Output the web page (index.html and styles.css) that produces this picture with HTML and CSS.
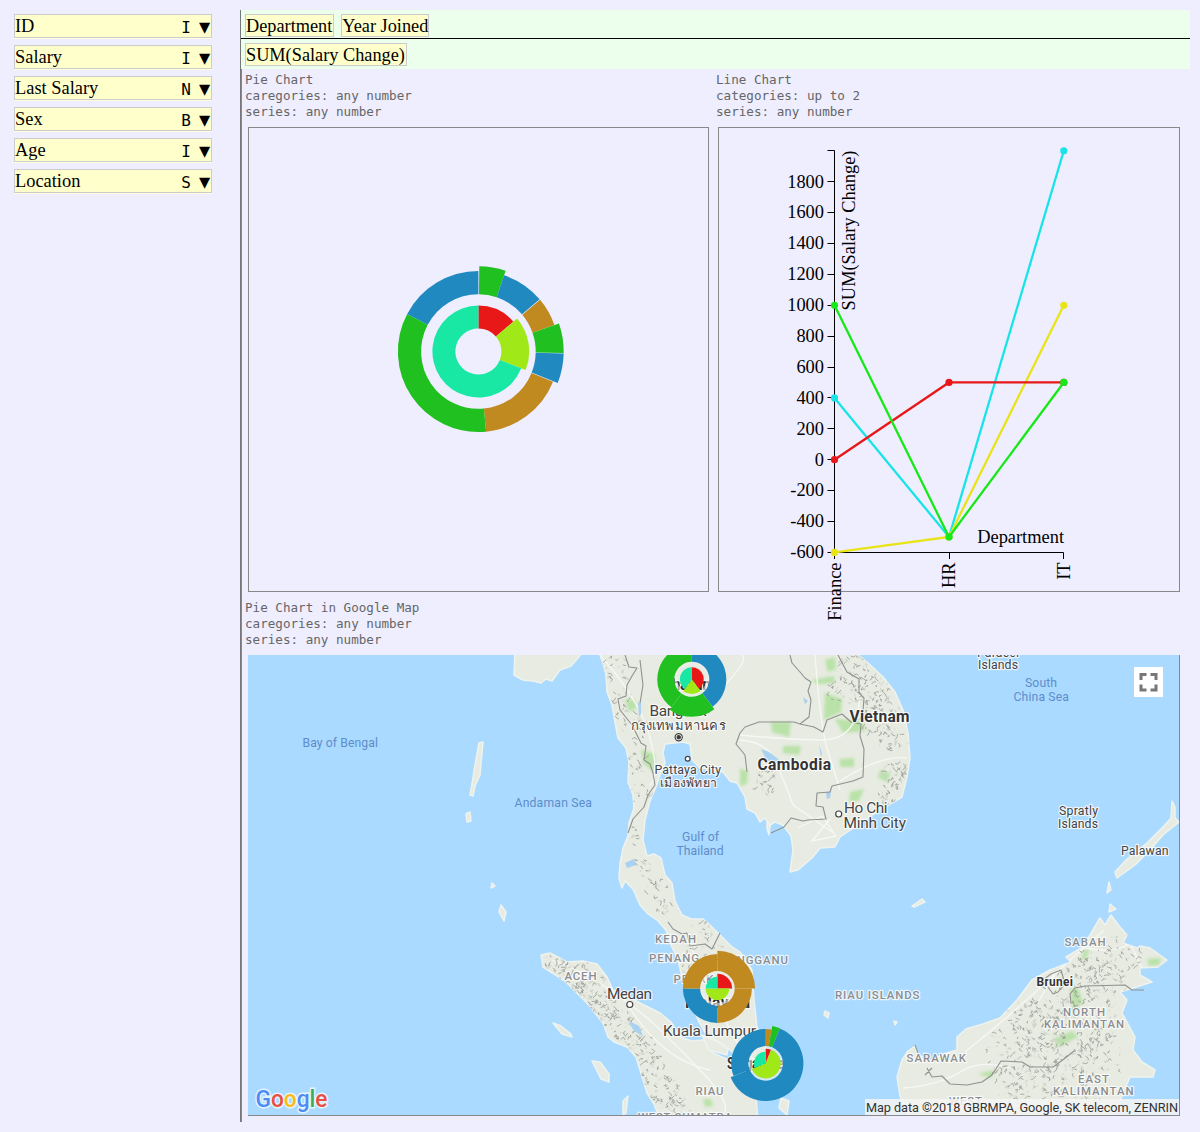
FILE: index.html
```html
<!DOCTYPE html>
<html lang="en">
<head>
<meta charset="utf-8">
<title>Salary pivot</title>
<link rel="stylesheet" href="styles.css">
</head>
<body>
<div class="app">
  <aside class="fields">
    <div class="field"><span>ID</span><span class="kind">I</span><span class="arrow">▼</span></div>
    <div class="field"><span>Salary</span><span class="kind">I</span><span class="arrow">▼</span></div>
    <div class="field"><span>Last Salary</span><span class="kind">N</span><span class="arrow">▼</span></div>
    <div class="field"><span>Sex</span><span class="kind">B</span><span class="arrow">▼</span></div>
    <div class="field"><span>Age</span><span class="kind">I</span><span class="arrow">▼</span></div>
    <div class="field"><span>Location</span><span class="kind">S</span><span class="arrow">▼</span></div>
  </aside>
  <main class="board">
    <div class="shelf categories"><span class="chip">Department</span><span class="chip">Year Joined</span></div>
    <div class="shelf series"><span class="chip">SUM(Salary Change)</span></div>
    <div class="charts">
      <section class="panel">
        <p class="caption">Pie Chart<br>caregories: any number<br>series: any number</p>
        <div class="frame"><svg class="plot" id="pie" viewBox="249 128 459 463"></svg></div>
      </section>
      <section class="panel">
        <p class="caption">Line Chart<br>categories: up to 2<br>series: any number</p>
        <div class="frame"><svg class="plot" id="line" viewBox="719 128 460 463"></svg></div>
      </section>
      <section class="panel wide">
        <p class="caption">Pie Chart in Google Map<br>caregories: any number<br>series: any number</p>
        <div class="map">
          <svg class="mapdraw" viewBox="248 655 931 460">
            <defs>
              <clipPath id="landclip"><use href="#mainland"/><use href="#sumatra"/><use href="#borneo"/></clipPath>
              <filter id="soft" x="-50%" y="-50%" width="200%" height="200%"><feGaussianBlur stdDeviation="1.4"/></filter>
            </defs>
            <g class="land">
              <path d="M515 650L514 675 523 680 533 681 541 683 546 679 552 681 560 670 571 666 578 658 584 650Z"/>
              <path id="mainland" d="M598 650L603 663 606 675 607 692 612 705 615 722 618 738 626 748 629 762 628 782 633 795 634 808 629 823 628 836 623 848 620 864 619 878 622 888 625 881 633 889 640 905 648 914 657 920 666 930 671 945 678 960 682 977 689 990 693 1007 699 1022 707 1036 722 1044 735 1054 750 1065 762 1068 769 1060 764 1042 757 1027 754 1000 752 970 740 952 731 946 720 935 710 925 703 919 691 919 682 915 675 901 672 883 665 875 661 858 654 854 647 856 643 840 645 820 650 801 656 787 660 775 665 763 663 753 665 744 674 743 683 742 690 744 692 760 700 768 710 769 723 772 730 781 737 783 745 797 747 809 755 813 760 822 765 818 770 825 775 822 783 825 791 836 793 850 790 872 798 870 812 858 820 848 835 847 840 837 855 827 880 810 902 797 907 777 910 758 908 733 903 710 895 692 883 677 867 662 852 650Z"/>
              <path id="sumatra" d="M541 955L550 953 567 962 583 961 597 964 607 977 613 990 625 995 640 1003 660 1013 671 1022 680 1037 692 1041 704 1040 713 1053 733 1062 747 1080 756 1098 758 1120 660 1120 654 1104 647 1093 640 1070 636 1057 627 1047 614 1042 608 1037 603 1023 587 1003 567 983 554 974 543 967Z"/>
              <path id="borneo" d="M910 1120L900 1096 897 1077 902 1060 908 1051 915 1046 918 1055 930 1061 944 1054 957 1050 957 1037 966 1029 983 1024 1000 1018 1017 1000 1032 980 1050 970 1058 967 1071 962 1066 957 1083 947 1100 918 1105 925 1111 915 1120 927 1127 935 1123 943 1137 948 1140 946 1150 948 1167 960 1158 967 1140 968 1140 975 1152 982 1133 988 1120 992 1127 1000 1122 1013 1135 1037 1133 1050 1142 1062 1155 1070 1153 1077 1130 1077 1123 1093 1113 1120Z"/>
              <path d="M1172 801L1175 807 1175 818 1179 822 1163 835 1150 850 1135 865 1117 878 1115 872 1127 859 1147 843 1163 827 1171 818Z"/>
              <path d="M479 743L483 742 481 763 480 775 475 786 473 796 470 795 472 784 474 771Z M466 814L470 812 471 821 467 822Z M501 905L506 912 504 921 499 912Z M553 1023L561 1026 571 1034 572 1037 562 1034Z M592 1061L600 1062 609 1074 609 1082 601 1079Z M623 1101L628 1096 626 1113 623 1115Z M702 1035L716 1041 728 1049 727 1055 709 1050Z M912 906L922 899 925 902 914 907Z M781 1098L789 1101 787 1115 779 1108Z M1109 882L1111 890 1107 893Z M1110 904L1116 909 1109 912Z M492 883L495 886 491 888Z M825 1011L829 1013 828 1018 824 1015Z M894 1021L897 1022 895 1025Z M767 822L770 826 769 835 767 829Z"/>
            </g>
            <g class="greens" clip-path="url(#landclip)" filter="url(#soft)">
              <path d="M625 699l9 1 4 7-9 5zM641 750l14 4-1 18-10-8zM825 660l10-3 1 12-8 3zM825 693l17 6-1 13-17 8zM812 680l22-4 1 7-18 1zM771 722h20l-2 15-17-5zM783 746h18l-2 9-16-2zM835 719l28 2 2 10-22 2zM840 759l14-1v9h-14zM880 770l10 3-2 9-10-4zM850 792l14-3-5 12-10 1zM740 768l8 4-1 12-7 2zM1070 989l8-1 5 14-10 10zM1084 951l6-3-3 9-7 5zM1053 1039l19-8 6 6-19 10zM1147 959l14-1-2 7-10 1zM978 1074l17-4-4 8zM703 1099h8l2 7-8 1zM675 975l10 6-2 10-6-2z"/>
            </g>
            <g class="roads" clip-path="url(#landclip)">
              <path d="M600 655Q640 700 650 738T650 785M740 740Q765 742 773 757T793 805L835 834M740 735Q780 739 820 740T860 690M815 655Q820 720 826 745L840 790M798 828l24 -12 14 20-24 5 18-22M840 781Q880 755 907 758M720 690Q750 660 742 655M552 960Q580 970 601 984T640 1012 700 1070 715 1116M625 1000Q660 1060 710 1070M690 945Q715 1000 730 1030T765 1063M965 1052Q1005 1020 1043 985T1104 930M903 1088Q940 1085 960 1072T1010 1068M1085 948Q1115 954 1130 943L1143 970M1055 975Q1045 990 1037 1004"/>
            </g>
            <g id="terrain" clip-path="url(#landclip)"></g>
            <g class="lakes"><path d="M761 749l8 3 13 10 7 7-10-5-12-3zM803 697l5 4-3 3zM625 863l9-4 2 6-9 3zM631 1022l8 4 4 10-9-5-5-8zM826 792l5-1-1 7-3 1zM638 703l3-1 0 12-2 3zM819 745l3 8-1 4z"/></g>
            <g class="borders">
              <path d="M625 655l4 12 8 1-5 8-5 9-1 11-8 3 2 11 12 15 9 18 5 3-2 14 6 4 3 9 2 12-7 10-4 12-11 12-5 14M640 660l3 25-3 18M790 655l2 8 8 9 5 6 6 4-3 9 3 9-2 17-9 7-6-2-35 0-14 5-5 6-4 11 9 11 2 17 M800 724l14 3 9 5 4-12 15-6 9 8 10 2-1 12 4 13-1 28-10 4-21 5-2 6-13 1-1 13 7 1 3 12-18 1-5 1-12-3-7 9-13 6M838 655l9 17 12 7 0 14 5 5-1 13-3 9M668 922l5 7 9 5 5-1 3 13 15-2 7 5 8-16M1043 980l8-6 10-4 4 14-7 8-5 2-10-14M1071 1003l-1-9 5-6 10-2 40-1 7 5 12 0M927 1068l5 9 10-1 8 8 17 1 15-3 10-7 9-14 21 1 8 5 23 0 11-8 10-8M925 1075l7-7M915 1045l3 8"/>
            </g>
            <g class="towns"><circle cx="687.7" cy="758.7" r="2.4"/><circle cx="838.7" cy="814" r="3"/><circle cx="629.8" cy="1004.5" r="3"/><circle cx="678.7" cy="737.3" r="3.6"/><circle class="capital" cx="678.7" cy="737.3" r="1.7"/></g>
            <g class="labels">
              <g class="sea">
                <text x="302.5" y="746.5" textLength="75.5">Bay of Bengal</text><text x="514.5" y="807" textLength="77.5">Andaman Sea</text>
                <text x="682" y="841" textLength="37">Gulf of</text><text x="676.5" y="855" textLength="47">Thailand</text>
                <text x="1025" y="687" textLength="32">South</text><text x="1013.5" y="701" textLength="55.5">China Sea</text>
              </g>
              <g class="place">
                <text x="977" y="657" textLength="42">Paracel</text><text x="978" y="669" textLength="40">Islands</text>
                <text x="1059" y="815" textLength="39">Spratly</text><text x="1058" y="828" textLength="40">Islands</text>
                <text x="1121" y="855" textLength="47.5">Palawan</text>
                <text x="654.5" y="774" textLength="66.5">Pattaya City</text><text x="660" y="786.5" textLength="57">เมืองพัทยา</text>
              </g>
              <g class="city">
                <text x="649.5" y="715.5" textLength="57">Bangkok</text><text class="thai" x="630.5" y="730" textLength="95">กรุงเทพมหานคร</text>
                <text x="844" y="812.5" textLength="43.5">Ho Chi</text><text x="843.5" y="827.5" textLength="62.5">Minh City</text>
                <text x="607" y="998.5" textLength="45">Medan</text><text x="663" y="1035.5" textLength="93">Kuala Lumpur</text>
              </g>
              <g class="country">
                <text x="849.5" y="721.5" textLength="60">Vietnam</text><text x="757.5" y="769.5" textLength="73.5">Cambodia</text>
                <text x="663" y="690" textLength="56">Thailand</text><text x="685" y="1008" textLength="65">Malaysia</text><text x="727" y="1069" textLength="57" lengthAdjust="spacingAndGlyphs">Singapore</text>
                <text class="small" x="1036.5" y="985.5" textLength="36.5">Brunei</text>
              </g>
              <g class="region">
                <text x="655" y="943" textLength="41">KEDAH</text><text x="649" y="961.5" textLength="50">PENANG</text><text x="706" y="963.5" textLength="82">TERENGGANU</text><text x="673.5" y="983" textLength="40">PERAK</text>
                <text x="564.5" y="979.5" textLength="32">ACEH</text><text x="695.5" y="1094.5" textLength="28">RIAU</text><text x="835" y="999" textLength="84.5">RIAU ISLANDS</text>
                <text x="1064.5" y="946" textLength="41">SABAH</text><text x="1063" y="1016" textLength="42">NORTH</text><text x="1044" y="1028" textLength="80">KALIMANTAN</text>
                <text x="906.5" y="1062" textLength="59.5">SARAWAK</text><text x="1078" y="1083" textLength="31">EAST</text><text x="1053" y="1094.5" textLength="80.5">KALIMANTAN</text>
                <text x="949" y="1105" textLength="33">WEST</text><text x="638" y="1120.5" textLength="94">WEST SUMATRA</text>
              </g>
            </g>
            <g id="mappies"></g>
            <text class="logo" x="255.500" y="1106.500" textLength="72" lengthAdjust="spacingAndGlyphs"><tspan class="lb">G</tspan><tspan class="lr">o</tspan><tspan class="ly">o</tspan><tspan class="lb">g</tspan><tspan class="lg">l</tspan><tspan class="lr">e</tspan></text>
            <rect x="1134" y="667" width="29" height="30" fill="#fff"/>
            <path d="M1141 680v-5.500h5.500M1150.500 674.500h5.500v5.500M1156 684.500v5.500h-5.500M1146.500 690h-5.500v-5.500" fill="none" stroke="#777" stroke-width="3"/>
            <rect x="865" y="1099" width="314" height="16" fill="#f5f5f5" fill-opacity=".85"/>
            <text class="credit" x="866" y="1111.500" textLength="312">Map data ©2018 GBRMPA, Google, SK telecom, ZENRIN</text>
          </svg>
        </div>
      </section>
    </div>
  </main>
</div>
<script src="charts.js"></script>
</body>
</html>
```
FILE: styles.css
```css
* { box-sizing: border-box; }
body { margin: 0; background: #eeeeff; color: #000; font: 18.4px/22px "Liberation Serif", serif; }
.app { display: flex; height: 1132px; padding: 10px 10px 10px 14px; }
.fields { width: 198px; margin-right: 28px; padding-top: 4px; display: flex; flex-direction: column; gap: 7px; }
.field { display: flex; height: 24px; border: 1px solid #ccc; background: #ffc; box-shadow: 0 1px #ffffdd; }
.kind { margin-left: auto; width: 10px; margin-right: 9px; text-align: center; font: 16px/25px "DejaVu Sans Mono", monospace; }
.arrow { width: 11px; font: 14.5px/25px "DejaVu Sans", sans-serif; text-indent: -1px; }
.board { flex: 1; border-left: 1px solid #777; }
.shelf { display: flex; gap: 7px; padding-left: 4px; background: #ecffec; }
.categories { height: 29px; padding-top: 4px; border-bottom: 1px solid #000; }
.series { height: 30px; padding-top: 4px; }
.chip { height: 23px; padding: 0 1px 0 0; border: 1px solid #ccc; background: #ffc; font-size: 18.3px; }
.chip + .chip { padding: 0; }
.charts { height: 1053px; display: grid; grid-template: 528px 1fr / 471px 1fr; border-left: 1px solid #888; }
.panel { padding: 3px 0 0 3px; }
.wide { grid-column: 1 / 3; }
.caption { margin: 0; height: 55px; color: #666; font: 12.6px/16.2px "DejaVu Sans Mono", monospace; }
.frame { width: 461px; height: 465px; margin-left: 3px; border: 1px solid #888; }
.panel:nth-child(2) .frame { width: 462px; margin-left: 2px; }
.plot { display: block; width: 100%; height: 100%; overflow: visible; }
.map { width: 932px; height: 461px; margin-left: 3px; border-right: 1px solid #888; border-bottom: 1px solid #888; background: #aadaff; }
.mapdraw { display: block; width: 931px; height: 460px; }
.axis { fill: none; stroke: #000; }
.series-line { fill: none; stroke-width: 2.3; }
.land path { fill: #e7ebe1; stroke: #eff3ee; stroke-width: 1.5; stroke-linejoin: round; }
.greens { fill: #b9e2a8; }
.lakes { fill: #a9d1f2; }
.roads { fill: none; stroke: #f7f8f4; stroke-width: 1.3; }
.borders { fill: none; stroke: #90918f; stroke-width: 1.1; stroke-linejoin: round; }
.ridge { fill: none; stroke: #999c95; stroke-width: .8; }
.hill { fill: #d0d4ca; }
.towns circle { fill: #fff; stroke: #444; stroke-width: 1.2; }
.towns .capital { fill: #333; }
.labels { font-family: Roboto, "Noto Sans", sans-serif; paint-order: stroke; stroke: #fff; stroke-opacity: .75; stroke-width: 2.4px; stroke-linejoin: round; }
.sea { font-size: 12.2px; fill: #5e8dcc; stroke: none; }
.place { font-size: 12.3px; fill: #444; }
.city { font-size: 15.4px; fill: #444; }
.thai { font-size: 13px; }
.country { font-size: 15.6px; font-weight: 700; fill: #333; }
.small { font-size: 12px; }
.region { font-size: 11.4px; font-weight: 500; fill: #8b8e90; }
.logo { font: 500 23.5px Roboto, sans-serif; paint-order: stroke; stroke: #fff; stroke-opacity: .7; stroke-width: 3px; }
.lb { fill: #4e8cf3; }
.lr { fill: #e94f43; }
.ly { fill: #fabc14; }
.lg { fill: #3cab5b; }
.credit { font: 12.7px Roboto, sans-serif; fill: #333; }
```
FILE: charts.js
```javascript
const NS = 'http://www.w3.org/2000/svg';
const GREEN = '#20c020', BLUE = '#208ac0', BROWN = '#c08a20';
const RED = '#e81818', LIME = '#a0e818', TEAL = '#18e8a4';

function add(parent, tag, attrs, text) {
  const el = document.createElementNS(NS, tag);
  for (const k in attrs) el.setAttribute(k, attrs[k]);
  if (text) el.textContent = text;
  parent.appendChild(el);
  return el;
}

// Ring segment; angles in degrees, clockwise from twelve o'clock.
function slice(parent, cx, cy, r0, r1, a0, a1, fill) {
  const p = (r, a) => [cx + r * Math.sin(a * Math.PI / 180), cy - r * Math.cos(a * Math.PI / 180)].map(v => v.toFixed(2)).join(' ');
  const big = a1 - a0 > 180 ? 1 : 0;
  add(parent, 'path', {
    d: `M${p(r0, a0)}L${p(r1, a0)}A${r1} ${r1} 0 ${big} 1 ${p(r1, a1)}L${p(r0, a1)}A${r0} ${r0} 0 ${big} 0 ${p(r0, a0)}Z`,
    fill
  });
}

const pie = document.getElementById('pie');
[[57.3, 85.3, 0.6, 18.6, GREEN], [57.3, 80.5, 18.6, 49.5, BLUE], [57.3, 80.5, 50, 70.8, BROWN],
 [57.3, 85.3, 70.8, 91, GREEN], [57.3, 85.3, 91.3, 111.6, BLUE], [57.3, 80.5, 112, 174.5, BROWN],
 [57.3, 80.5, 174.5, 297.8, GREEN], [57.3, 80.5, 297.8, 360, BLUE],
 [23, 46, 0, 49.5, RED], [23, 50.8, 49.5, 111.5, LIME], [23, 46, 111.5, 360, TEAL]
].forEach(s => slice(pie, 478.4, 351.5, ...s));

const pins = document.getElementById('mappies');
[[691.8, 679.3,
  [[17.5, 34.5, 0, 143, BLUE], [17.5, 37.5, 143, 216, GREEN], [17.5, 34.5, 216, 360, GREEN],
   [0, 12, 0, 143, RED], [0, 14.7, 143, 216, LIME], [0, 12, 216, 360, TEAL]]],
 [717.4, 988.4,
  [[17.3, 37.7, 0, 90, BROWN], [17.3, 34.5, 90, 180, BROWN], [17.3, 34.5, 180, 270, BLUE], [17.3, 34.5, 270, 360, BROWN],
   [0, 14.7, 0, 90, RED], [0, 11.7, 90, 270, LIME], [0, 11.7, 270, 360, TEAL]]],
 [765.7, 1063.4,
  [[17.3, 34.5, 0, 10, BROWN], [17.3, 38, 10, 22, GREEN], [17.3, 37.7, 22, 248.4, BLUE], [17.3, 34.5, 248.4, 360, BLUE],
   [0, 14.7, 0, 21, RED], [0, 15, 21, 248.4, LIME], [0, 11.7, 248.4, 360, TEAL]]]
].forEach(([x, y, parts]) => {
  add(pins, 'circle', { cx: x, cy: y, r: 16, fill: 'none', stroke: '#eeeeee', 'stroke-width': 3, 'stroke-opacity': 0.6 });
  parts.forEach(s => slice(pins, x, y, ...s));
});

const line = document.getElementById('line');
const X = [834.5, 949, 1063.8];
const Y = v => 459.7 - v * 0.15447;
add(line, 'path', { class: 'axis', d: 'M827.5 150.5H834.5V552.5H827.5M834.5 559V552.5H1063.5V559M949.5 552.5V559' });
for (let v = -600; v <= 1800; v += 200) {
  if (v > -600) add(line, 'path', { class: 'axis', d: `M827.5 ${Math.floor(Y(v)) + 0.5}H834.5` });
  add(line, 'text', { x: 824, y: Y(v) + 5.9, 'text-anchor': 'end' }, String(v));
}
['Finance', 'HR', 'IT'].forEach((t, i) =>
  add(line, 'text', { transform: `translate(${X[i] + 6} 562.5) rotate(-90)`, 'text-anchor': 'end' }, t));
add(line, 'text', { transform: 'translate(854.5 150.5) rotate(-90)', 'text-anchor': 'end' }, 'SUM(Salary Change)');
add(line, 'text', { x: 1064, y: 542.5, 'text-anchor': 'end' }, 'Department');
[['#18e4e8', [400, -500, 2000]], ['#e8e418', [-600, -500, 1000]], ['#e81818', [0, 500, 500]], ['#18e818', [1000, -500, 500]]
].forEach(([c, vals]) => {
  add(line, 'path', { class: 'series-line', stroke: c, d: 'M' + vals.map((v, i) => X[i] + ' ' + Y(v)).join('L') });
  vals.forEach((v, i) => add(line, 'circle', { cx: X[i], cy: Y(v), r: 3.6, fill: c }));
});

// Hill shading: short ridge strokes scattered over the mountain areas [x, y, radius, count].
let seed = 7;
const rnd = () => (seed = (seed * 16807) % 2147483647) / 2147483647;
const terrain = document.getElementById('terrain');
let ridges = '', hills = '';
[[615, 670, 14, 16], [622, 705, 14, 18], [634, 730, 13, 16], [636, 765, 12, 18], [640, 795, 11, 10], [632, 835, 9, 8],
 [640, 870, 12, 10], [655, 885, 12, 12], [662, 905, 10, 10], [700, 938, 20, 24], [690, 965, 14, 16], [735, 975, 14, 12],
 [765, 782, 13, 24], [855, 670, 18, 32], [870, 692, 20, 50], [880, 715, 20, 40], [893, 740, 14, 26], [895, 775, 14, 36], [885, 795, 12, 20], [840, 690, 14, 16],
 [555, 965, 12, 18], [575, 978, 18, 44], [592, 992, 18, 50], [602, 1010, 16, 44], [622, 1025, 16, 36], [640, 1045, 16, 34], [650, 1070, 17, 36], [665, 1092, 17, 36], [678, 1110, 14, 26],
 [1095, 955, 18, 30], [1120, 955, 22, 24], [1080, 980, 24, 44], [1105, 985, 24, 34], [1055, 1000, 24, 40], [1085, 1020, 32, 70], [1040, 1030, 30, 60],
 [1010, 1050, 26, 40], [1060, 1060, 34, 80], [1100, 1055, 26, 45], [1015, 1085, 28, 50], [1070, 1090, 32, 50], [1025, 1015, 18, 18]
].forEach(([cx, cy, r, n]) => {
  for (let i = 0; i < n * 1.3; i++) {
    const a = rnd() * 6.283, d = Math.sqrt(rnd()) * r;
    const x = cx + Math.cos(a) * d, y = cy + Math.sin(a) * d;
    const q = () => (rnd() * 6 - 3).toFixed(1);
    if (i % 2) ridges += `M${x.toFixed(1)} ${y.toFixed(1)}l${q()} ${q()} ${q()} ${q()}`;
    else hills += `M${x.toFixed(1)} ${y.toFixed(1)}l${q()} ${q()} ${q()} ${q()} ${q()} ${q()}z`;
  }
});
add(terrain, 'path', { class: 'hill', d: hills });
add(terrain, 'path', { class: 'ridge', d: ridges });
```
